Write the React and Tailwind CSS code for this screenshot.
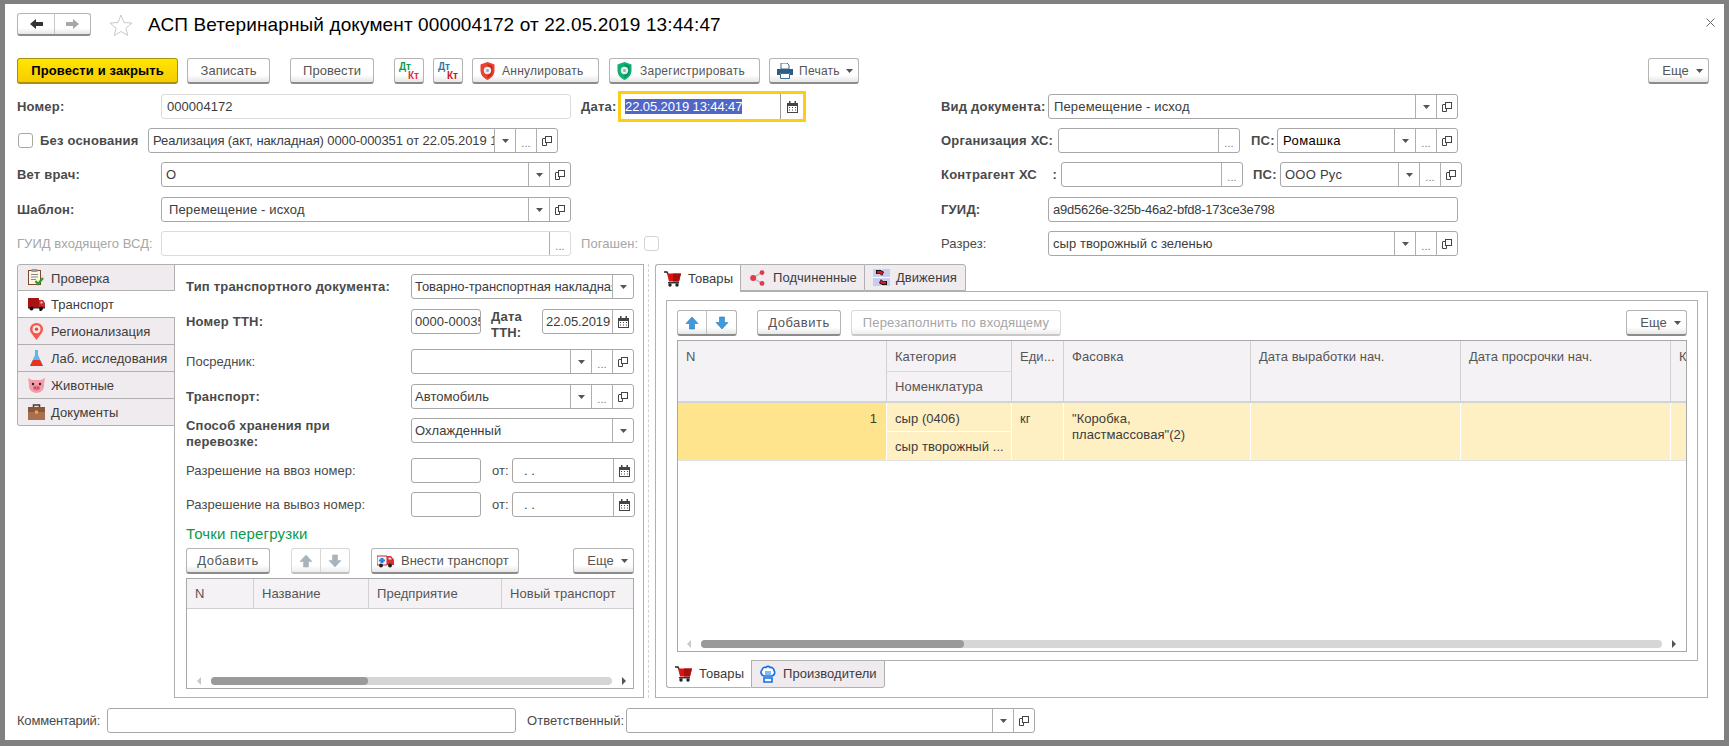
import React from 'react';

const Tri = ({ c = '#555' }) => (
  <svg width="7" height="4" viewBox="0 0 7 4"><path d="M0 0h7L3.5 4z" fill={c} /></svg>
);

const OpenIco = () => (
  <svg width="12" height="12" viewBox="0 0 12 12" fill="none" stroke="#444">
    <rect x="4.5" y="1.5" width="6" height="6" fill="#fff" />
    <path d="M4.5 3.5h-2.5M1.5 3.5v7h4v-3" />
  </svg>
);

const CalIco = () => (
  <svg width="11" height="12" viewBox="0 0 11 12">
    <path d="M0 2h11v10H0z" fill="#444" />
    <path d="M2 0h1.500v3H2zM7.500 0H9v3H7.500z" fill="#444" />
    <path d="M1 5h9v6H1z" fill="#fff" />
    <path d="M2 6h1v1H2zM5 6h1v1H5zM8 6h1v1H8zM2 8.500h1v1H2zM5 8.500h1v1H5zM8 8.500h1v1H8z" fill="#444" />
  </svg>
);

const Arrow = ({ dir = 'up', c = '#3d9ade', s = '#2b79b5' }) => (
  <svg width="14" height="14" viewBox="0 0 14 14" className={dir === 'down' ? 'rotate-180' : ''}>
    <path d="M7 1l6 6.500H9.500V13h-5V7.500H1z" fill={c} stroke={s} strokeWidth="0.600" />
  </svg>
);

const Shield = ({ c, d }) => (
  <svg width="15" height="18" viewBox="0 0 15 18">
    <path d="M7.500 0l7 2.500v6c0 4.500-3 7.500-7 9.500-4-2-7-5-7-9.500v-6z" fill={c} />
    <path d="M7.500 2l5 2v5c0 3-2 5.500-5 7z" fill={d} />
    <circle cx="7.500" cy="8.500" r="3.700" fill="#e8eef0" />
    <circle cx="7.500" cy="8.500" r="1.500" fill="#8fb0bb" />
  </svg>
);

const Printer = () => (
  <svg width="16" height="16" viewBox="0 0 16 16">
    <path d="M4 0h6l2 2v4H4z" fill="#fff" stroke="#3f6d92" />
    <path d="M0 6h16v6h-3v-2H3v2H0z" fill="#2f5d84" />
    <path d="M3.500 10.500h9v5h-9z" fill="#fff" stroke="#3f6d92" />
  </svg>
);

const Clipboard = () => (
  <svg width="16" height="17" viewBox="0 0 16 17">
    <rect x="0.500" y="1.500" width="12" height="14" fill="#fdf6e4" stroke="#7a4a30" />
    <rect x="3.500" y="0" width="6" height="3" fill="#9a9a9a" />
    <path d="M3 5.500h7M3 8h7M3 10.500h5" stroke="#8a8a8a" />
    <path d="M7.500 12l2.500 3 5-6" stroke="#2c9a2c" strokeWidth="2.200" fill="none" />
  </svg>
);

const Truck = () => (
  <svg width="17" height="14" viewBox="0 0 17 14">
    <path d="M0 1h11v9H0z" fill="#a81414" />
    <path d="M11 3h4l2 3v4h-6z" fill="#c62a2a" />
    <path d="M12.500 4.500h2v2h-2z" fill="#f2c9c9" />
    <path d="M0 10h17v1.500H0z" fill="#333" />
    <circle cx="3.500" cy="11.500" r="2" fill="#111" />
    <circle cx="13" cy="11.500" r="2" fill="#111" />
    <path d="M11.500 13h2v1h-2z" fill="#111" />
  </svg>
);

const Pin = () => (
  <svg width="13" height="17" viewBox="0 0 13 17">
    <path d="M6.500 17C3 12 0 9.500 0 6.200a6.500 6.200 0 0 1 13 0C13 9.500 10 12 6.500 17z" fill="#f4594c" />
    <circle cx="6.500" cy="6.200" r="4" fill="#fbe3df" />
    <circle cx="6.500" cy="6.200" r="1.600" fill="#e4423a" />
  </svg>
);

const Flask = () => (
  <svg width="13" height="16" viewBox="0 0 13 16">
    <path d="M5 0h3v5l5 11H0l5-11z" fill="#5cb8ea" />
    <path d="M3 10h7l3 6H0z" fill="#e8321e" />
  </svg>
);

const Pig = () => (
  <svg width="17" height="15" viewBox="0 0 17 15">
    <path d="M0 0l4 2h9l4-2-1 6c1 5-3 9-7.500 9S0 11 1 6z" fill="#f49ca8" />
    <circle cx="5" cy="6" r="1.200" fill="#222" />
    <circle cx="12" cy="6" r="1.200" fill="#222" />
    <ellipse cx="8.500" cy="10" rx="3.500" ry="2.400" fill="#e56c82" />
    <path d="M7 9.200v1.500M10 9.200v1.500" stroke="#8a2a3e" />
  </svg>
);

const Case = () => (
  <svg width="17" height="16" viewBox="0 0 17 16">
    <path d="M5.500 3V1h6v2" fill="none" stroke="#5a3722" strokeWidth="1.500" />
    <path d="M0 3h17v5H0z" fill="#8a5638" />
    <path d="M0 8h17v8H0z" fill="#a87050" />
    <path d="M7 6.500h3v3H7z" fill="#e8b030" />
  </svg>
);

const Cart = () => (
  <svg width="17" height="16" viewBox="0 0 17 16">
    <path d="M0 1h3l1 2" fill="none" stroke="#222" strokeWidth="1.500" />
    <path d="M3 2.500h14l-2 8H5z" fill="#d91414" />
    <path d="M9 2.500h8l-2 8H9z" fill="#a81010" />
    <path d="M4 11h11v1.500H4z" fill="#333" />
    <circle cx="6" cy="14" r="1.700" fill="#222" />
    <circle cx="13" cy="14" r="1.700" fill="#222" />
  </svg>
);

const Share = () => (
  <svg width="15" height="16" viewBox="0 0 15 16">
    <path d="M3 8l9-5.500M3 8l9 5.500" stroke="#b9b4b8" strokeWidth="1.200" />
    <circle cx="3.200" cy="8" r="3" fill="#e23a46" />
    <circle cx="12" cy="2.600" r="2.400" fill="#e23a46" />
    <circle cx="12" cy="13.400" r="2.400" fill="#e23a46" />
  </svg>
);

const Moves = () => (
  <svg width="17" height="17" viewBox="0 0 17 17">
    <path d="M0 0h17v17H0z" fill="#c8cdee" />
    <path d="M0 8.500h17M8.500 0v17" stroke="#fff" />
    <path d="M3 1h5l3 2-2 4-2-2H3z" fill="#111" />
    <path d="M4 2h4l2 1.500-1 2.500-2-1.500H4z" fill="#e01818" />
    <path d="M14 16H9l-3-2 2-4 2 2h4z" fill="#111" />
    <path d="M13 15H9l-2-1.500 1-2.500 2 1.500h3z" fill="#e01818" />
  </svg>
);

const Hat = () => (
  <svg width="16" height="18" viewBox="0 0 16 18" fill="#fff" stroke="#1170e8" strokeWidth="1.600">
    <path d="M4 11C1 10 0 7 2 5c.5-3 3-3 4-2.500C7 1 9 1 10 2.500c2-.5 4 1 4 3 1.500 2 .5 4.500-2 5.500z" />
    <path d="M4 13h8v4H4z" />
    <path d="M6 6v4M8 6v4M10 6v4" strokeWidth="1" />
  </svg>
);

const Ambulance = () => (
  <svg width="17" height="14" viewBox="0 0 17 14">
    <path d="M0 2h10v9H0z" fill="#f4f4f4" stroke="#c62a2a" />
    <path d="M3.500 4h3v5h-3z" fill="#2a7fe0" />
    <path d="M2 5.500h6v2H2z" fill="#2a7fe0" />
    <path d="M10 2h4l3 3.500V11h-7z" fill="#d83030" />
    <path d="M11.500 3.500h2l1.500 2h-3.500z" fill="#d7e9f6" />
    <circle cx="4" cy="11.500" r="2" fill="#222" />
    <circle cx="13" cy="11.500" r="2" fill="#222" />
  </svg>
);

const btnBase = 'h-[26px] shrink-0 flex items-center rounded-[3px] border border-[#b4b4b4] border-b-2 border-b-[#8c8c8c] bg-linear-to-b from-white from-70% to-[#e6e6e6]';

const Btn = ({ w, className = '', start, children }) => (
  <div className={`${btnBase} ${start ? 'justify-start' : 'justify-center'} ${w} ${className}`}>{children}</div>
);

const Seg = ({ kind }) => (
  <div className="w-[21px] shrink-0 self-stretch border-l border-[#b0b0b0] flex items-center justify-center">
    {kind === 'down' && <Tri />}
    {kind === 'dots' && <span className="text-[11px] text-[#777] mt-[4px]">...</span>}
    {kind === 'open' && <OpenIco />}
    {kind === 'cal' && <CalIco />}
  </div>
);

const Field = ({ w, value, segs = [], tone = 'text-[#3c3c3c]', pl = 'pl-[5px]', light, h = 'h-[25px]' }) => (
  <div className={`${w} ${h} shrink-0 flex rounded-[3px] border bg-white ${light ? 'border-[#dcdcdc]' : 'border-[#a8a8a8]'}`}>
    <div className={`flex-1 min-w-0 overflow-hidden whitespace-nowrap flex items-center ${pl} ${tone}`}>{value}</div>
    {segs.map((s, i) => <Seg key={i} kind={s} />)}
  </div>
);

const Label = ({ w, children, bold, dim, className = '' }) => (
  <div className={`${w} shrink-0 whitespace-nowrap ${bold ? 'font-bold text-[#4a4a4a] tracking-[0.2px]' : dim ? 'text-[#a6a6a6]' : 'text-[#4a4a4a]'} ${className}`}>{children}</div>
);

const Check = ({ light }) => (
  <div className={`w-[15px] h-[15px] shrink-0 rounded-[3px] border bg-white ${light ? 'border-[#d4d4d4]' : 'border-[#a8a8a8]'}`} />
);

const Scroll = ({ left, track, thumb, right }) => (
  <div className="h-[8px] flex items-center">
    <svg width="4" height="8" viewBox="0 0 4 8" className={left}><path d="M4 0v8L0 4z" fill="#c8c8c8" /></svg>
    <div className={`${track} h-[8px] rounded-full bg-[#d6d6d6]`}>
      <div className={`${thumb} h-[8px] rounded-full bg-[#9a9a9a]`} />
    </div>
    <svg width="4" height="8" viewBox="0 0 4 8" className={right}><path d="M0 0v8l4-4z" fill="#555" /></svg>
  </div>
);

const sideTabs = [
  ['Проверка', <Clipboard />],
  ['Транспорт', <Truck />],
  ['Регионализация', <Pin />],
  ['Лаб. исследования', <Flask />],
  ['Животные', <Pig />],
  ['Документы', <Case />],
];

const Head = ({ w, children, last }) => (
  <div className={`${w} shrink-0 overflow-hidden whitespace-nowrap bg-[#f5f2f5] px-[8px] ${last ? '' : 'border-r border-[#d2d2d2]'}`}>{children}</div>
);

export default function App() {
  return (
    <div className="w-[1729px] h-[746px] overflow-hidden bg-[#808080] pt-[4px] px-[5px] text-[13px] leading-[16px] tracking-[0.05px] text-[#3c3c3c] [font-family:'Liberation_Sans',Arial,sans-serif]">
      <div className="h-[736px] bg-white">
        {/* заголовок */}
        <div className="h-[54px] pl-[12px] pt-[9px] flex items-start">
          <div className="w-[74px] h-[23px] flex rounded-[3px] border border-[#b4b4b4] border-b-2 border-b-[#8c8c8c] bg-linear-to-b from-white from-70% to-[#e6e6e6]">
            <div className="w-[37px] border-r border-[#c8c8c8] flex items-center justify-center">
              <svg width="13" height="10" viewBox="0 0 13 10"><path d="M0 5l6-5v3h7v4H6v3z" fill="#333" /></svg>
            </div>
            <div className="flex-1 flex items-center justify-center">
              <svg width="13" height="10" viewBox="0 0 13 10"><path d="M13 5L7 0v3H0v4h7v3z" fill="#a8a8a8" /></svg>
            </div>
          </div>
          <svg width="24" height="22" viewBox="0 0 24 22" className="ml-[18px] mt-[1px]">
            <path d="M12 1l3 7.500 8 .6-6.200 5 2 7.400L12 17.500 5.200 21.500l2-7.400L1 9.100l8-.6z" fill="none" stroke="#c9c9c9" />
          </svg>
          <div className="ml-[15px] text-[19px] leading-[23px] tracking-[0.12px] text-black whitespace-nowrap">АСП Ветеринарный документ 000004172 от 22.05.2019 13:44:47</div>
          <svg width="9" height="9" viewBox="0 0 9 9" className="ml-auto mr-[9px] mt-[5px]">
            <path d="M.5.500l8 8M8.500.500l-8 8" stroke="#666" />
          </svg>
        </div>

        {/* командная панель */}
        <div className="pl-[12px] pr-[15px] flex">
          <div className="h-[26px] w-[161px] flex items-center justify-center rounded-[3px] border border-[#a8900c] border-b-2 bg-linear-to-b from-[#ffe600] to-[#f7cc00] font-bold text-black tracking-[0.13px]">Провести и закрыть</div>
          <Btn w="w-[83px]" className="ml-[9px] text-[#555]">Записать</Btn>
          <Btn w="w-[84px]" className="ml-[20px] text-[#555]">Провести</Btn>
          <Btn w="w-[30px]" className="ml-[20px]">
            <div className="w-[20px] flex flex-col text-[10px] leading-[9px] font-bold tracking-normal">
              <span className="text-[#109a50]">Дт</span>
              <span className="text-[#e0303a] self-end">Кт</span>
            </div>
          </Btn>
          <Btn w="w-[30px]" className="ml-[9px]">
            <div className="w-[20px] flex flex-col text-[10px] leading-[9px] font-bold tracking-normal">
              <span className="text-[#2f78a8]">Дт</span>
              <span className="text-[#c81818] self-end">Кт</span>
            </div>
          </Btn>
          <Btn start w="w-[127px]" className="ml-[9px] pl-[7px] gap-[7px] text-[#555] text-[12px] tracking-[0.25px]"><Shield c="#e8432e" d="#c9281c" />Аннулировать</Btn>
          <Btn start w="w-[151px]" className="ml-[10px] pl-[7px] gap-[8px] text-[#555] text-[12px] tracking-[0.25px]"><Shield c="#0fb070" d="#07935a" />Зарегистрировать</Btn>
          <Btn start w="w-[90px]" className="ml-[9px] pl-[7px] gap-[6px] text-[#555] text-[12px] tracking-[0.25px]"><Printer />Печать<Tri /></Btn>
          <Btn w="w-[61px]" className="ml-auto gap-[7px] text-[#555] pl-[8px]">Еще<Tri /></Btn>
        </div>

        {/* реквизиты */}
        <div className="h-[180px] pl-[12px] pt-[10px] flex">
          <div className="w-[924px] shrink-0">
            <div className="h-[25px] mb-[9px] flex items-center">
              <Label w="w-[144px]" bold>Номер:</Label>
              <Field w="w-[410px]" value="000004172" light />
              <Label w="w-[37px]" bold className="ml-[10px]">Дата:</Label>
              <div className="w-[188px] h-[31px] shrink-0 flex items-center border-[3px] border-[#ffcc14] pl-[4px]">
                <div className="flex-1"><span className="bg-[#5066c8] text-white inline-block leading-[15px] tracking-[-0.1px]">22.05.2019 13:44:47</span></div>
                <div className="w-[23px] h-[25px] border-l border-[#9a9a9a] flex items-center justify-center"><CalIco /></div>
              </div>
            </div>
            <div className="h-[25px] mb-[9px] flex items-center">
              <div className="pl-[1px] pr-[7px]"><Check /></div>
              <Label w="w-[108px]" bold>Без основания</Label>
              <Field w="w-[410px]" value="Реализация (акт, накладная) 0000-000351 от 22.05.2019 1" segs={['down', 'dots', 'open']} pl="pl-[4px]" tone="text-[#3c3c3c] tracking-[-0.1px]" />
            </div>
            <div className="h-[25px] mb-[10px] flex items-center">
              <Label w="w-[144px]" bold>Вет врач:</Label>
              <Field w="w-[410px]" value="О" segs={['down', 'open']} pl="pl-[4px]" />
            </div>
            <div className="h-[25px] mb-[9px] flex items-center">
              <Label w="w-[144px]" bold>Шаблон:</Label>
              <Field w="w-[410px]" value="Перемещение - исход" segs={['down', 'open']} pl="pl-[7px]" tone="text-[#3c3c3c] tracking-[0.15px]" />
            </div>
            <div className="h-[25px] flex items-center">
              <Label w="w-[144px]" dim>ГУИД входящего ВСД:</Label>
              <Field w="w-[410px]" value="" segs={['dots']} light />
              <Label w="w-[55px]" dim className="ml-[10px]">Погашен:</Label>
              <div className="ml-[8px]"><Check light /></div>
            </div>
          </div>
          <div className="flex-1">
            <div className="h-[25px] mb-[9px] flex items-center">
              <Label w="w-[107px]" bold>Вид документа:</Label>
              <Field w="w-[410px]" value="Перемещение - исход" segs={['down', 'open']} tone="text-[#3c3c3c] tracking-[0.15px]" />
            </div>
            <div className="h-[25px] mb-[9px] flex items-center">
              <Label w="w-[117px]" bold>Организация ХС:</Label>
              <Field w="w-[182px]" value="" segs={['dots']} />
              <Label w="w-[26px]" bold className="ml-[11px]">ПС:</Label>
              <Field w="w-[181px]" value="Ромашка" segs={['down', 'dots', 'open']} tone="text-black tracking-[0.4px]" />
            </div>
            <div className="h-[25px] mb-[10px] flex items-center">
              <Label w="w-[120px]" bold><div className="w-[116px] flex justify-between"><span>Контрагент ХС</span><span>:</span></div></Label>
              <Field w="w-[182px]" value="" segs={['dots']} />
              <Label w="w-[27px]" bold className="ml-[10px]">ПС:</Label>
              <Field w="w-[182px]" value="ООО Рус" segs={['down', 'dots', 'open']} pl="pl-[4px]" tone="text-[#3c3c3c] tracking-[0.25px]" />
            </div>
            <div className="h-[25px] mb-[9px] flex items-center">
              <Label w="w-[107px]" bold>ГУИД:</Label>
              <Field w="w-[410px]" value="a9d5626e-325b-46a2-bfd8-173ce3e798" pl="pl-[4px]" tone="text-[#3c3c3c] tracking-[-0.25px]" />
            </div>
            <div className="h-[25px] flex items-center">
              <Label w="w-[107px]">Разрез:</Label>
              <Field w="w-[410px]" value="сыр творожный с зеленью" segs={['down', 'dots', 'open']} pl="pl-[4px]" />
            </div>
          </div>
        </div>

        {/* основная часть */}
        <div className="h-[434px] pl-[12px] flex items-stretch">
          <div className="w-[158px] shrink-0 -mr-px relative z-10">
            {sideTabs.map(([name, ico], i) => (
              <div key={name} className={`h-[27px] flex items-center border-l border-b border-[#b0b0b0] ${i === 0 ? 'border-t rounded-tl-[3px]' : ''} ${i === 5 ? 'rounded-bl-[3px]' : ''} ${i === 1 ? 'bg-white' : 'bg-[#efebef] border-r'}`}>
                <div className="w-[33px] flex justify-center pl-[3px]">{ico}</div>
                <span className="text-[#3c3c3c] pt-[2px]">{name}</span>
              </div>
            ))}
          </div>

          <div className="w-[470px] shrink-0 border border-[#b0b0b0] pl-[11px] pr-[9px] pt-[9px]">
            <div className="h-[35px] flex items-start">
              <Label w="w-[225px]" bold className="h-[25px] flex items-center">Тип транспортного документа:</Label>
              <Field w="w-[223px]" value="Товарно-транспортная накладная" segs={['down']} pl="pl-[3px]" tone="text-[#3c3c3c] tracking-[-0.05px]" />
            </div>
            <div className="h-[40px] flex items-start">
              <Label w="w-[225px]" bold className="h-[25px] flex items-center">Номер ТТН:</Label>
              <Field w="w-[70px]" value="0000-000351" pl="pl-[3px]" />
              <div className="w-[51px] ml-[10px] shrink-0 font-bold text-[#4a4a4a] tracking-[0.2px]">Дата ТТН:</div>
              <Field w="w-[92px]" value="22.05.2019" segs={['cal']} pl="pl-[3px]" tone="text-[#3c3c3c] tracking-[-0.1px]" />
            </div>
            <div className="h-[35px] flex items-start">
              <Label w="w-[225px]" className="h-[25px] flex items-center">Посредник:</Label>
              <Field w="w-[223px]" value="" segs={['down', 'dots', 'open']} />
            </div>
            <div className="h-[34px] flex items-start">
              <Label w="w-[225px]" bold className="h-[25px] flex items-center">Транспорт:</Label>
              <Field w="w-[223px]" value="Автомобиль" segs={['down', 'dots', 'open']} pl="pl-[3px]" />
            </div>
            <div className="h-[40px] flex items-start">
              <div className="w-[225px] shrink-0 font-bold text-[#4a4a4a] tracking-[0.2px]">Способ хранения при<br />перевозке:</div>
              <Field w="w-[223px]" value="Охлажденный" segs={['down']} pl="pl-[3px]" />
            </div>
            <div className="h-[34px] flex items-start">
              <Label w="w-[225px]" className="h-[25px] flex items-center">Разрешение на ввоз номер:</Label>
              <Field w="w-[70px]" value="" />
              <Label w="w-[20px]" className="ml-[11px] h-[25px] flex items-center">от:</Label>
              <Field w="w-[123px]" value=".   ." segs={['cal']} pl="pl-[11px]" />
            </div>
            <div className="h-[32px] flex items-start">
              <Label w="w-[225px]" className="h-[25px] flex items-center">Разрешение на вывоз номер:</Label>
              <Field w="w-[70px]" value="" />
              <Label w="w-[20px]" className="ml-[11px] h-[25px] flex items-center">от:</Label>
              <Field w="w-[123px]" value=".   ." segs={['cal']} pl="pl-[11px]" />
            </div>
            <div className="h-[24px] text-[15px] leading-[20px] text-[#0a9a4a] tracking-[0.15px]">Точки перегрузки</div>
            <div className="h-[30px] flex">
              <Btn w="w-[84px]" className="text-[#555] tracking-[0.5px]">Добавить</Btn>
              <div className="ml-[21px] w-[59px] h-[26px] flex rounded-[3px] border border-[#d8d8d8] border-b-2 border-b-[#c0c0c0] bg-linear-to-b from-white from-70% to-[#eeeeee]">
                <div className="w-[29px] border-r border-[#d8d8d8] flex items-center justify-center"><Arrow c="#a8b4bc" s="#a8b4bc" /></div>
                <div className="flex-1 flex items-center justify-center"><Arrow dir="down" c="#a8b4bc" s="#a8b4bc" /></div>
              </div>
              <Btn start w="w-[148px]" className="ml-[21px] pl-[5px] gap-[7px] text-[#555] tracking-[0px]"><Ambulance />Внести транспорт</Btn>
              <Btn w="w-[61px]" className="ml-auto gap-[7px] text-[#555] pl-[8px]">Еще<Tri /></Btn>
            </div>
            <div className="h-[111px] border border-[#a8a8a8] flex flex-col">
              <div className="h-[30px] flex items-center border-b border-[#cfcfcf] text-[#555]">
                <Head w="w-[67px] h-full flex items-center">N</Head>
                <Head w="w-[115px] h-full flex items-center">Название</Head>
                <Head w="w-[133px] h-full flex items-center">Предприятие</Head>
                <Head w="flex-1 h-full flex items-center" last>Новый транспорт</Head>
              </div>
              <div className="mt-auto mb-[3px]">
                <Scroll left="ml-[10px]" track="w-[401px] ml-[10px]" thumb="w-[157px]" right="ml-[10px]" />
              </div>
            </div>
          </div>

          <div className="w-px ml-[4px] border-l border-dashed border-[#d4d4d4]" />

          <div className="w-[1053px] ml-[6px] shrink-0 flex flex-col">
            <div className="h-[28px] flex relative z-10 -mb-px">
              <div className="w-[85px] h-[28px] flex items-center gap-[7px] pl-[8px] rounded-tl-[3px] border-l border-t border-[#b0b0b0] bg-white"><Cart />Товары</div>
              <div className="w-[124px] h-[27px] flex items-center gap-[8px] pl-[9px] border-l border-t border-b border-[#b0b0b0] bg-[#efebef]"><Share />Подчиненные</div>
              <div className="w-[102px] h-[27px] flex items-center gap-[6px] pl-[8px] rounded-tr-[3px] border-l border-r border-t border-b border-[#b0b0b0] bg-[#efebef]"><Moves />Движения</div>
            </div>
            <div className="flex-1 border border-[#b0b0b0] pl-[10px] pt-[8px]">
              <div className="w-[1032px] h-[361px] border border-[#b0b0b0] pl-[10px] pt-[9px]">
                <div className="w-[1010px] h-[30px] flex">
                  <div className="w-[60px] h-[26px] flex rounded-[3px] border border-[#b4b4b4] border-b-2 border-b-[#8c8c8c] bg-linear-to-b from-white from-70% to-[#e6e6e6]">
                    <div className="w-[29px] border-r border-[#c0c0c0] flex items-center justify-center"><Arrow /></div>
                    <div className="flex-1 flex items-center justify-center"><Arrow dir="down" /></div>
                  </div>
                  <Btn w="w-[84px]" className="ml-[20px] text-[#555] tracking-[0.5px]">Добавить</Btn>
                  <div className="ml-[10px] w-[210px] h-[26px] flex items-center justify-center rounded-[3px] border border-[#d8d8d8] border-b-2 border-b-[#c8c8c8] bg-linear-to-b from-white from-70% to-[#eeeeee] text-[#a6a6a6] tracking-[0.15px]">Перезаполнить по входящему</div>
                  <Btn w="w-[61px]" className="ml-auto gap-[7px] text-[#555] pl-[8px]">Еще<Tri /></Btn>
                </div>
                <div className="w-[1010px] h-[312px] border border-[#a8a8a8] flex flex-col overflow-hidden">
                  <div className="h-[62px] shrink-0 flex border-b-2 border-[#d4d4d4] text-[#555]">
                    <Head w="w-[209px] pt-[8px]">N</Head>
                    <div className="w-[125px] shrink-0 flex flex-col border-r border-[#d2d2d2]">
                      <div className="h-[31px] bg-[#f5f2f5] px-[8px] pt-[8px] border-b border-[#d8d8d8]">Категория</div>
                      <div className="flex-1 bg-[#f5f2f5] px-[8px] pt-[7px]">Номенклатура</div>
                    </div>
                    <Head w="w-[52px] pt-[8px]">Еди...</Head>
                    <Head w="w-[187px] pt-[8px]">Фасовка</Head>
                    <Head w="w-[210px] pt-[8px]">Дата выработки нач.</Head>
                    <Head w="w-[210px] pt-[8px]">Дата просрочки нач.</Head>
                    <Head w="flex-1 pt-[8px]" last>К</Head>
                  </div>
                  <div className="h-[58px] shrink-0 flex border-b border-[#e2e2e2] text-[#3c3c3c]">
                    <div className="w-[209px] shrink-0 bg-[#fde48d] border-r border-white text-right pr-[9px] pt-[8px]">1</div>
                    <div className="w-[125px] shrink-0 flex flex-col border-r border-white bg-[#fef0c3]">
                      <div className="h-[29px] px-[8px] pt-[8px] border-b border-white">сыр (0406)</div>
                      <div className="flex-1 px-[8px] pt-[7px] whitespace-nowrap">сыр творожный ...</div>
                    </div>
                    <div className="w-[52px] shrink-0 bg-[#fef0c3] border-r border-white px-[8px] pt-[8px]">кг</div>
                    <div className="w-[187px] shrink-0 bg-[#fef0c3] border-r border-white px-[8px] pt-[8px]">"Коробка,<br />пластмассовая"(2)</div>
                    <div className="w-[210px] shrink-0 bg-[#fef0c3] border-r border-white" />
                    <div className="w-[210px] shrink-0 bg-[#fef0c3] border-r border-white" />
                    <div className="flex-1 bg-[#fef0c3]" />
                  </div>
                  <div className="mt-auto mb-[3px]">
                    <Scroll left="ml-[9px]" track="w-[961px] ml-[10px]" thumb="w-[263px]" right="ml-[10px]" />
                  </div>
                </div>
              </div>
              <div className="h-[28px] -mt-px flex relative z-10">
                <div className="w-[85px] h-[28px] flex items-center gap-[7px] pl-[8px] rounded-bl-[3px] border-l border-b border-[#b0b0b0] bg-white"><Cart />Товары</div>
                <div className="w-[134px] h-[28px] flex items-center gap-[7px] pl-[8px] rounded-br-[3px] border border-[#b0b0b0] bg-[#efebef]"><Hat />Производители</div>
              </div>
            </div>
          </div>
        </div>

        {/* низ формы */}
        <div className="pl-[12px] pt-[10px] flex items-center">
          <Label w="w-[90px]" className="tracking-[-0.2px]">Комментарий:</Label>
          <Field w="w-[409px]" value="" />
          <Label w="w-[99px]" className="ml-[11px]">Ответственный:</Label>
          <Field w="w-[409px]" value="" segs={['down', 'open']} />
        </div>
      </div>
    </div>
  );
}
